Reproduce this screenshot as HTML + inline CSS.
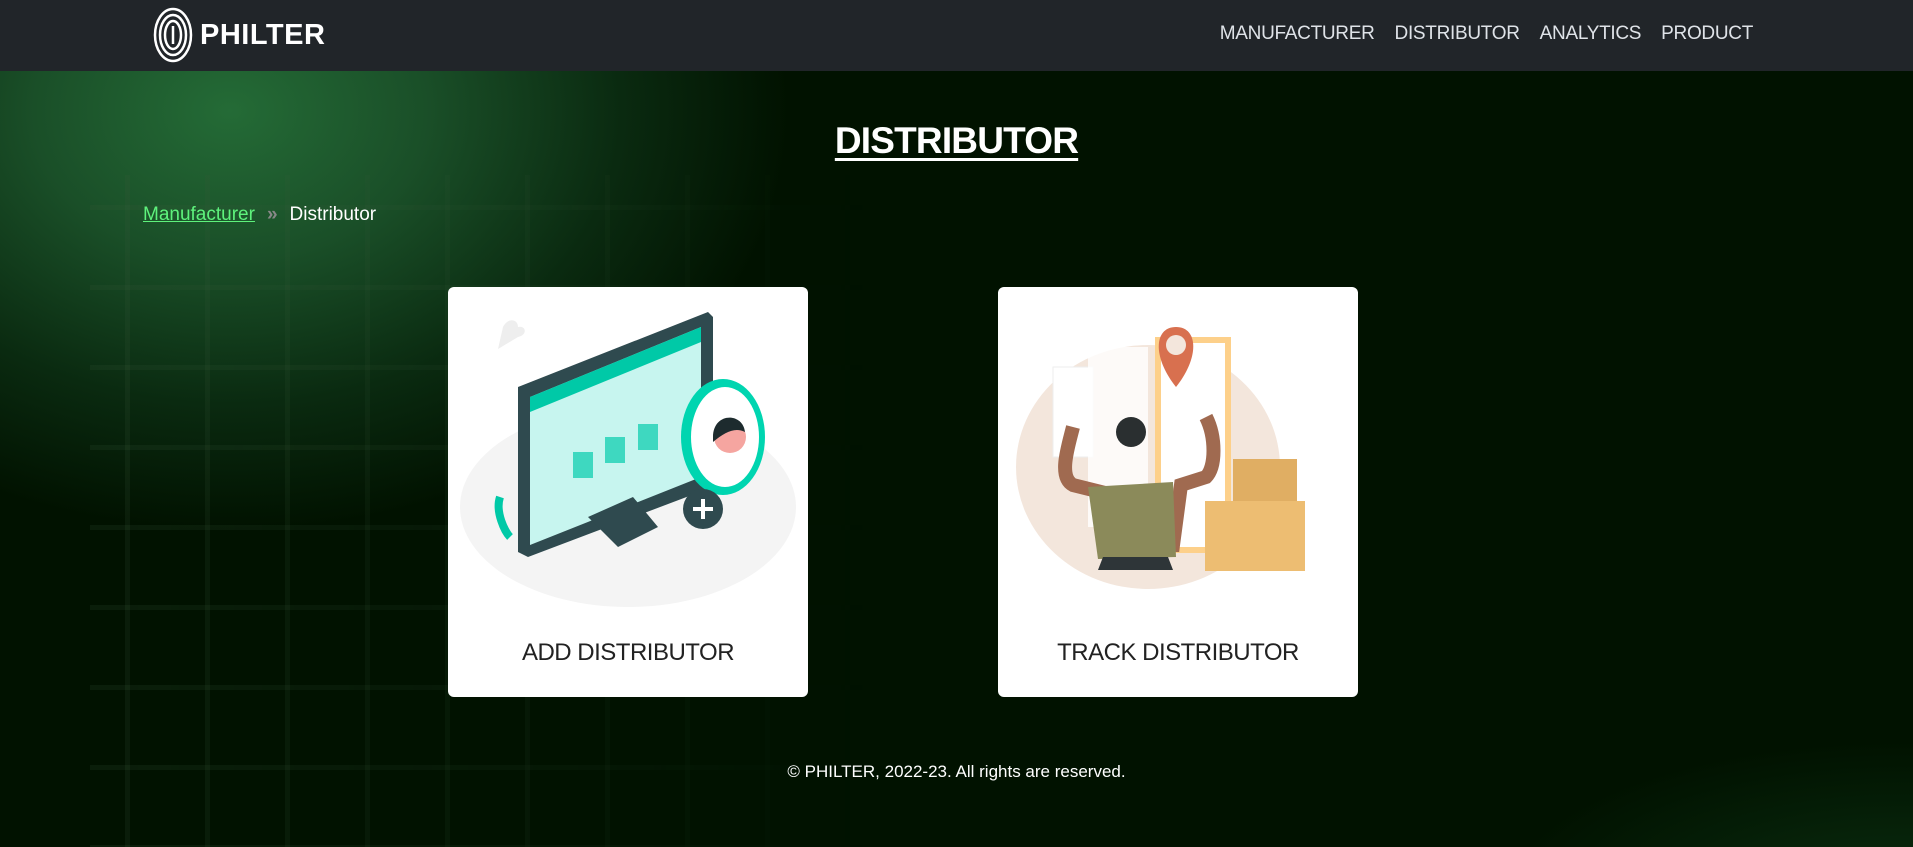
<!DOCTYPE html>
<html><head><meta charset="utf-8"><style>
*{margin:0;padding:0;box-sizing:border-box}
body{width:1913px;height:847px;overflow:hidden;font-family:"Liberation Sans",sans-serif;background:#011200;position:relative}
.bg{position:absolute;left:0;top:71px;width:1913px;height:776px;
background:radial-gradient(ellipse 560px 420px at 230px 40px,#246b36 0%,#1a4f28 35%,#0a2a10 70%,rgba(1,18,0,0) 100%),radial-gradient(ellipse 400px 160px at 1900px 830px,#0a2e10 0%,rgba(1,18,0,0) 100%),#011200;}
.grid{position:absolute;left:90px;top:175px;width:780px;height:672px;
background-image:linear-gradient(90deg,rgba(60,90,60,.22) 5px,transparent 5px),linear-gradient(rgba(60,90,60,.22) 5px,transparent 5px);
background-size:80px 80px;background-position:35px 0,0 30px;
-webkit-mask-image:linear-gradient(90deg,rgba(0,0,0,.8),rgba(0,0,0,.4) 60%,transparent);}
nav{position:absolute;left:0;top:0;width:1913px;height:71px;background:#212529}
.logo{position:absolute;left:152px;top:6px;display:flex;align-items:center}
.logo span{color:#fff;font-weight:bold;font-size:29px;margin-left:6px;letter-spacing:.5px}
.links{position:absolute;right:160px;top:23px;display:flex;gap:20px;font-size:19px;color:#dfe3e8;letter-spacing:-.3px}
h1{position:absolute;left:0;width:1913px;top:120px;text-align:center;color:#fff;font-size:37px;font-weight:bold;text-decoration:underline;text-decoration-thickness:3px;text-underline-offset:5px;letter-spacing:-.8px}
.bc{position:absolute;left:143px;top:204px;font-size:19px;color:#fff}
.bc a{color:#5ef27c;text-decoration:underline}
.bc .sep{color:#888;margin:0 12px;font-weight:bold}
.card{position:absolute;top:287px;width:360px;height:410px;background:#fff;border-radius:6px}
.card .t{position:absolute;bottom:30px;width:100%;text-align:center;font-size:24px;color:#222;letter-spacing:-.5px}
footer{position:absolute;top:762px;width:1913px;text-align:center;color:#fff;font-size:17px}
</style></head><body>
<div class="bg"></div><div class="grid"></div>
<nav>
<div class="logo"><svg width="42" height="58" viewBox="0 0 42 58" fill="none" stroke="#fff" stroke-width="2.5"><ellipse cx="21" cy="29" rx="18" ry="26"/><ellipse cx="21" cy="29" rx="13" ry="20"/><ellipse cx="21" cy="29" rx="8" ry="14"/><path d="M21 20v18"/></svg><span>PHILTER</span></div>
<div class="links"><span>MANUFACTURER</span><span>DISTRIBUTOR</span><span>ANALYTICS</span><span>PRODUCT</span></div>
</nav>
<h1>DISTRIBUTOR</h1>
<div class="bc"><a>Manufacturer</a><span class="sep">»</span>Distributor</div>
<div class="card" style="left:448px">
<svg width="360" height="330" viewBox="0 0 360 330" style="position:absolute;left:0;top:0">
<ellipse cx="180" cy="220" rx="168" ry="100" fill="#f4f4f4"/>
<path d="M55 40c5-10 15-8 15 0 8-2 10 8 0 10l-20 12z" fill="#eee"/>
<polygon points="70,100 260,25 265,30 265,200 80,270 70,265" fill="#2f4a4f"/>
<polygon points="82,110 253,40 253,190 82,258" fill="#c7f5ef"/>
<polygon points="82,110 253,40 253,55 82,125" fill="#00c9a7"/>
<rect x="125" y="165" width="20" height="26" fill="#3ed8c0"/><rect x="157" y="150" width="20" height="26" fill="#3ed8c0"/><rect x="190" y="137" width="20" height="26" fill="#3ed8c0"/>
<polygon points="140,230 185,210 210,240 170,260" fill="#2f4a4f"/>
<ellipse cx="275" cy="150" rx="42" ry="58" fill="#00d5b0"/><ellipse cx="277" cy="150" rx="34" ry="50" fill="#fff"/>
<circle cx="282" cy="150" r="16" fill="#f5a5a0"/><path d="M265 150c0-25 30-25 32-5-10-5-20 0-32 10z" fill="#1d2b2e"/>
<circle cx="255" cy="222" r="20" fill="#2f4a4f"/><path d="M255 212v20M245 222h20" stroke="#fff" stroke-width="4"/>
<path d="M52 210c-5 15 5 35 10 40" stroke="#00c9a7" stroke-width="8" fill="none"/>
</svg>
<div class="t">ADD DISTRIBUTOR</div></div>
<div class="card" style="left:998px">
<svg width="360" height="330" viewBox="0 0 360 330" style="position:absolute;left:0;top:0">
<ellipse cx="150" cy="180" rx="132" ry="122" fill="#f3e6dc"/>
<rect x="55" y="80" width="40" height="90" fill="#fff" stroke="#eee"/>
<rect x="160" y="53" width="70" height="210" fill="#fff" stroke="#fdd08a" stroke-width="6"/>
<rect x="90" y="60" width="60" height="180" fill="#fff" opacity=".8"/>
<path d="M178 40c-22 0-24 30 0 60 24-30 22-60 0-60z" fill="#d8704f"/><circle cx="178" cy="58" r="10" fill="#f3e6dc"/>
<rect x="235" y="172" width="64" height="42" fill="#e0ae63"/><rect x="207" y="214" width="100" height="70" fill="#edbd72"/>
<path d="M75 140c-5 20-15 50 0 58l40 10 10 50h50l8-60 25-8c10-10 10-40 0-60" fill="none" stroke="#a06a50" stroke-width="14"/>
<polygon points="90,200 175,195 178,270 100,272" fill="#8b8a5a"/>
<polygon points="105,270 170,270 175,283 100,283" fill="#2e3538"/>
<circle cx="133" cy="145" r="15" fill="#2a2f30"/>
</svg>
<div class="t">TRACK DISTRIBUTOR</div></div>
<footer>© PHILTER, 2022-23. All rights are reserved.</footer>
</body></html>
